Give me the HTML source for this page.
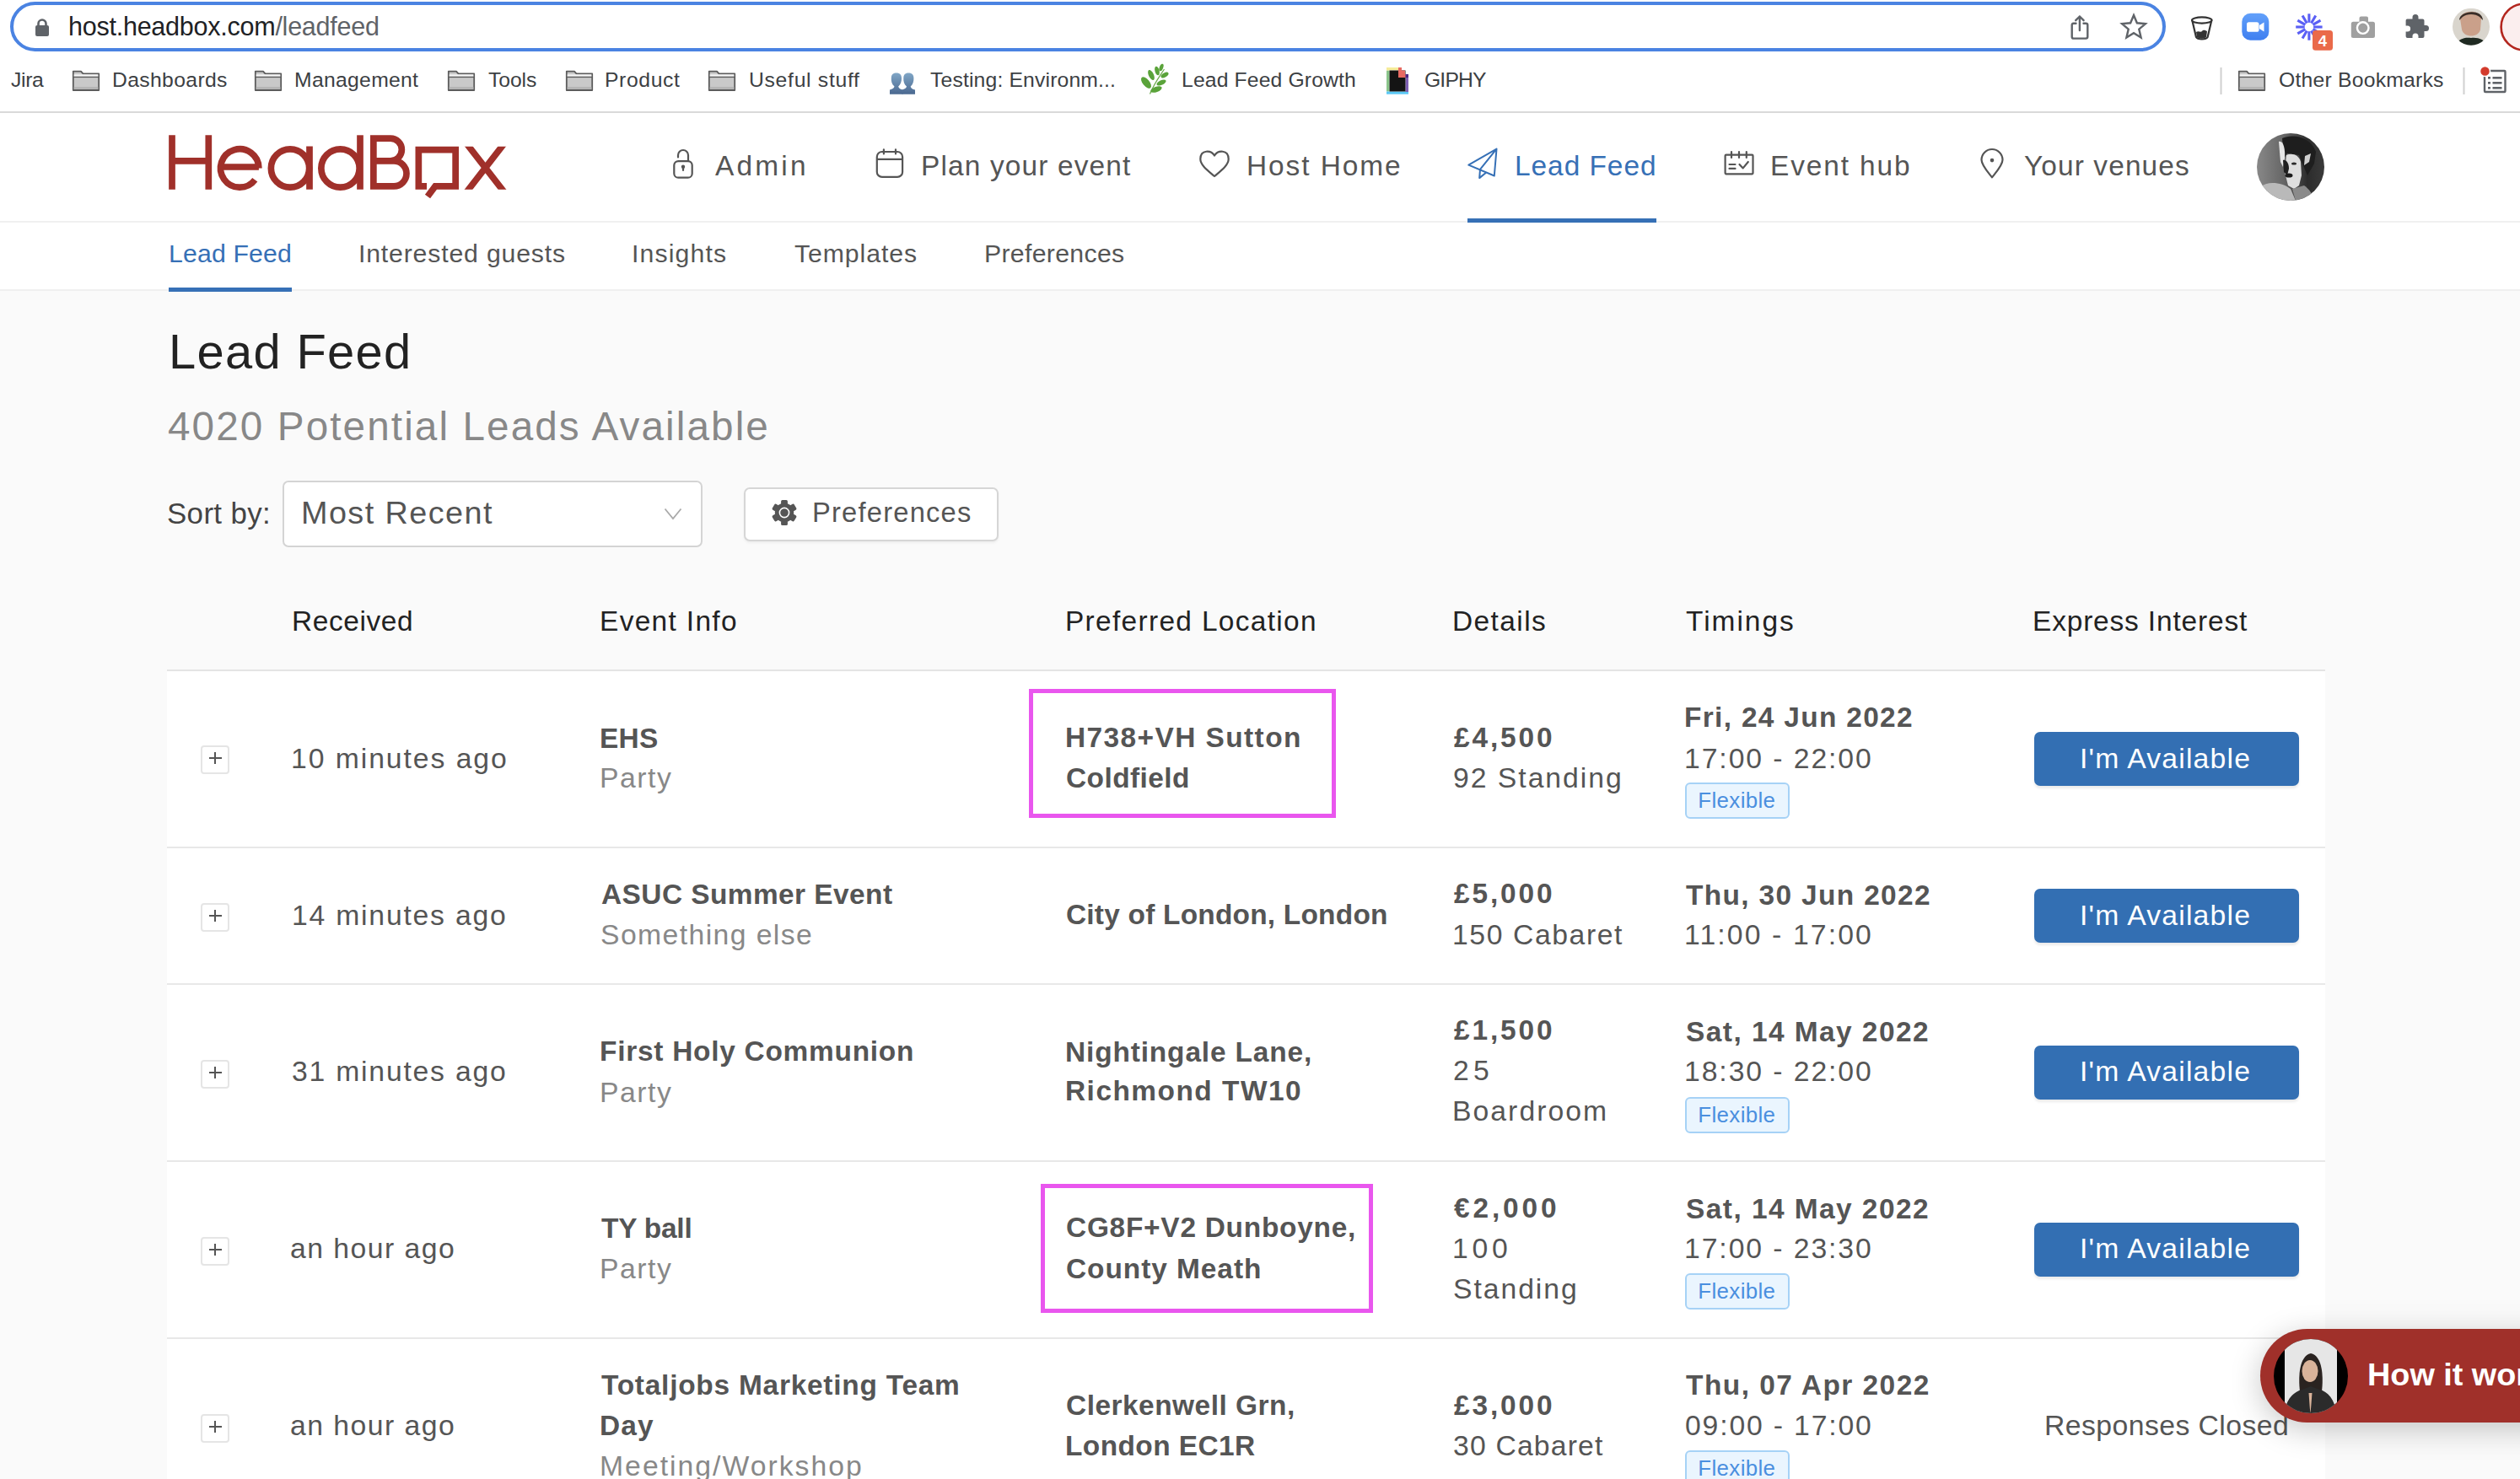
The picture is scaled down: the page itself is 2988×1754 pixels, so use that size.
<!DOCTYPE html>
<html><head><meta charset="utf-8">
<style>
html,body{margin:0;padding:0;}
body{width:2988px;height:1754px;overflow:hidden;background:#fafafa;position:relative;font-family:"Liberation Sans",sans-serif;}
.a{position:absolute;}
.t{position:absolute;white-space:pre;line-height:1;font-family:"Liberation Sans",sans-serif;}
svg{position:absolute;overflow:visible;}
</style></head><body>
<!-- browser chrome -->
<div class="a" style="left:0;top:0;width:2988px;height:132px;background:#fff"></div>
<div class="a" style="left:0;top:132px;width:2988px;height:2px;background:#d9d9d9"></div>
<div class="a" style="left:12px;top:2px;width:2548px;height:51px;border:4px solid #4a83e2;border-radius:30px;background:#fff"></div>
<!-- site header -->
<div class="a" style="left:0;top:134px;width:2988px;height:210px;background:#fff"></div>
<div class="a" style="left:0;top:262px;width:2988px;height:2px;background:#f0f0f0"></div>
<div class="a" style="left:0;top:343px;width:2988px;height:2px;background:#f0f0f0"></div>
<div class="a" style="left:1740px;top:259px;width:224px;height:5px;background:#3670b6"></div>
<div class="a" style="left:200px;top:341px;width:146px;height:5px;background:#3670b6"></div>

<!-- controls -->
<div class="a" style="left:335px;top:570px;width:494px;height:75px;border:2px solid #d4d4d4;border-radius:7px;background:#fff"></div>
<div class="a" style="left:882px;top:578px;width:298px;height:60px;border:2px solid #d6d6d6;border-radius:7px;background:#fff;box-shadow:0 2px 3px rgba(0,0,0,0.05)"></div>

<!-- table -->
<div class="a" style="left:198px;top:796px;width:2559px;height:960px;background:#fff"></div>
<div class="a" style="left:198px;top:794px;width:2559px;height:2px;background:#e4e4e4"></div>
<div class="a" style="left:198px;top:1004px;width:2559px;height:2px;background:#e8e8e8"></div>
<div class="a" style="left:198px;top:1166px;width:2559px;height:2px;background:#e8e8e8"></div>
<div class="a" style="left:198px;top:1376px;width:2559px;height:2px;background:#e8e8e8"></div>
<div class="a" style="left:198px;top:1586px;width:2559px;height:2px;background:#e8e8e8"></div>

<!-- PLUS BOXES -->
<div class="a" style="left:238px;top:884px;width:30px;height:30px;border:2px solid #e5e5e5;border-radius:4px;background:#fff"></div>
<div class="a" style="left:248px;top:897.5px;width:14.5px;height:2.4px;background:#555"></div>
<div class="a" style="left:254.1px;top:891.5px;width:2.4px;height:14px;background:#555"></div>
<div class="a" style="left:238px;top:1071px;width:30px;height:30px;border:2px solid #e5e5e5;border-radius:4px;background:#fff"></div>
<div class="a" style="left:248px;top:1084.5px;width:14.5px;height:2.4px;background:#555"></div>
<div class="a" style="left:254.1px;top:1078.5px;width:2.4px;height:14px;background:#555"></div>
<div class="a" style="left:238px;top:1257px;width:30px;height:30px;border:2px solid #e5e5e5;border-radius:4px;background:#fff"></div>
<div class="a" style="left:248px;top:1270.5px;width:14.5px;height:2.4px;background:#555"></div>
<div class="a" style="left:254.1px;top:1264.5px;width:2.4px;height:14px;background:#555"></div>
<div class="a" style="left:238px;top:1467px;width:30px;height:30px;border:2px solid #e5e5e5;border-radius:4px;background:#fff"></div>
<div class="a" style="left:248px;top:1480.5px;width:14.5px;height:2.4px;background:#555"></div>
<div class="a" style="left:254.1px;top:1474.5px;width:2.4px;height:14px;background:#555"></div>
<div class="a" style="left:238px;top:1677px;width:30px;height:30px;border:2px solid #e5e5e5;border-radius:4px;background:#fff"></div>
<div class="a" style="left:248px;top:1690.5px;width:14.5px;height:2.4px;background:#555"></div>
<div class="a" style="left:254.1px;top:1684.5px;width:2.4px;height:14px;background:#555"></div>
<div class="a" style="left:1220px;top:817px;width:354px;height:143px;border:5px solid #e956ee"></div>
<div class="a" style="left:1234px;top:1404px;width:384px;height:143px;border:5px solid #e956ee"></div>
<div class="a" style="left:2412px;top:868px;width:314px;height:64px;background:#336fb3;border-radius:7px;box-shadow:0 3px 3px rgba(0,0,0,0.08)"></div>
<div class="a" style="left:2412px;top:1054px;width:314px;height:64px;background:#336fb3;border-radius:7px;box-shadow:0 3px 3px rgba(0,0,0,0.08)"></div>
<div class="a" style="left:2412px;top:1240px;width:314px;height:64px;background:#336fb3;border-radius:7px;box-shadow:0 3px 3px rgba(0,0,0,0.08)"></div>
<div class="a" style="left:2412px;top:1450px;width:314px;height:64px;background:#336fb3;border-radius:7px;box-shadow:0 3px 3px rgba(0,0,0,0.08)"></div>
<div class="a" style="left:1998px;top:928px;width:120px;height:39px;background:#eaf5fe;border:2px solid #a6d2f6;border-radius:6px"></div>
<div class="a" style="left:1998px;top:1301px;width:120px;height:39px;background:#eaf5fe;border:2px solid #a6d2f6;border-radius:6px"></div>
<div class="a" style="left:1998px;top:1510px;width:120px;height:39px;background:#eaf5fe;border:2px solid #a6d2f6;border-radius:6px"></div>
<div class="a" style="left:1998px;top:1720px;width:120px;height:39px;background:#eaf5fe;border:2px solid #a6d2f6;border-radius:6px"></div><svg class="a" style="left:0;top:0" width="2988" height="300" viewBox="0 0 2988 300">
<defs><clipPath id="xclip"><rect x="540" y="173.8" width="70" height="50.9"/></clipPath></defs>
<g fill="none" stroke="#a0302a" stroke-width="7.7">
<path d="M204,160.3V224.7M247.3,160.3V224.7M204,190.9H247.3"/>
<path d="M261.5,198H306.9M306.9,199.5A22.7,22.7 0 1 0 302.3,213.2"/>
<circle cx="344" cy="199.5" r="22.65"/><path d="M367,173.5V224.7"/>
<circle cx="403.5" cy="199.5" r="22.65"/><path d="M427,160.3V224.7"/>
<path d="M442.85,160.3V224.7M439,164.15H463A13.35,13.35 0 0 1 463,190.85H439M439,190.85H467A15,15 0 0 1 467,220.85H439"/>
<path d="M506,220.85H496.35V177.65H540.15V220.85H516L507,233"/>
<g clip-path="url(#xclip)"><path d="M553,170L598,228M598,170L553,228"/></g>
</g></svg>
<svg class="a" style="left:0;top:0" width="2988" height="300" viewBox="0 0 2988 300">
<g fill="none" stroke="#555" stroke-width="2.2" stroke-linecap="round" stroke-linejoin="round">
<rect x="799.3" y="191.1" width="21.4" height="19.6" rx="5"/>
<path d="M804,186.4V184A6,6 0 0 1 816,184V191"/>
<path d="M810,198V202"/>
<rect x="1039.8" y="180" width="30.3" height="29.9" rx="6"/>
<path d="M1040,188.8H1070M1047.9,177.3V182.5M1062,177.3V182.5"/>
<path d="M1440,184.5C1436,178 1423.5,177 1423.3,188.5C1423.2,196 1433,203 1440,209C1447,203 1456.8,196 1456.7,188.5C1456.5,177 1444,178 1440,184.5Z"/>
<rect x="2045.6" y="183.7" width="32.9" height="22.6" rx="1"/>
<path d="M2053,180V187M2062,180V187M2070.8,180V187M2050.5,195H2057.5M2050.5,199.9H2057.5M2062.5,195L2066.7,199.4L2072.8,192"/>
<path d="M2362,210.3C2357,204 2349.5,196 2349.5,189.5A12.5,12.5 0 0 1 2374.5,189.5C2374.5,196 2367,204 2362,210.3Z"/>
</g>
<circle cx="810" cy="197.8" r="2.2" fill="#555"/>
<circle cx="2362" cy="190.1" r="2.3" fill="#555"/>
<g fill="none" stroke="#3670b6" stroke-width="2" stroke-linejoin="round">
<path d="M1774.5,176.6L1741.3,195.7L1771.8,208.5Z M1774.5,176.6L1755,200.8L1754.2,211.1L1762.3,204.5"/>
</g>
</svg>
<svg class="a" style="left:2676px;top:158px" width="80" height="80" viewBox="0 0 80 80">
<defs><clipPath id="avc"><circle cx="40" cy="40" r="40"/></clipPath>
<linearGradient id="avbg" x1="0" y1="0" x2="1" y2="0"><stop offset="0" stop-color="#888"/><stop offset="0.4" stop-color="#666"/><stop offset="0.75" stop-color="#2c2c2c"/><stop offset="1" stop-color="#3a3a3a"/></linearGradient></defs>
<g clip-path="url(#avc)">
<rect width="80" height="80" fill="url(#avbg)"/>
<path d="M30,6C42,0 64,4 70,22L68,36L60,50L54,36L50,26L36,24L32,30Z" fill="#1e1e1e"/>
<path d="M26,10C31,8 34,18 33,30L31,40L28,34Z" fill="#e6e6e6"/>
<path d="M57,27L64,24L62,34L56,38Z" fill="#cfcfcf"/>
<path d="M35,26C42,23 50,26 52,34L53,50L50,62L44,66L37,62L33,46Z" fill="#dedede"/>
<path d="M31,32C35,31 38,36 38,42L36,50L32,46Z" fill="#202020"/>
<ellipse cx="38" cy="50" rx="4.5" ry="2.6" fill="#1c1c1c"/>
<ellipse cx="44" cy="36" rx="3" ry="1.6" fill="#2a2a2a"/>
<path d="M4,64C12,56 30,58 40,66L46,80L0,80Z" fill="#b9b9b9"/>
<path d="M42,66L56,62C62,66 66,72 68,80L46,80Z" fill="#8a8a8a"/>
</g></svg>
<svg class="a" style="left:914.9px;top:592.6px" width="30" height="30" viewBox="-15 -15 30 30">
<g fill="#555">
<circle r="11.2"/>
<rect x="-3.9" y="-15" width="7.8" height="6" rx="1.5" transform="rotate(0)"/><rect x="-3.9" y="-15" width="7.8" height="6" rx="1.5" transform="rotate(60)"/><rect x="-3.9" y="-15" width="7.8" height="6" rx="1.5" transform="rotate(120)"/><rect x="-3.9" y="-15" width="7.8" height="6" rx="1.5" transform="rotate(180)"/><rect x="-3.9" y="-15" width="7.8" height="6" rx="1.5" transform="rotate(240)"/><rect x="-3.9" y="-15" width="7.8" height="6" rx="1.5" transform="rotate(300)"/>
</g>
<circle r="5.6" fill="none" stroke="#fff" stroke-width="1.6"/>
</svg>
<svg class="a" style="left:0;top:0" width="1000" height="700"><path d="M788.5,603.5L798,615L807.5,603.5" fill="none" stroke="#aaa" stroke-width="1.8"/></svg><svg class="a" style="left:0;top:0" width="2988" height="134" viewBox="0 0 2988 134"><path d="M45.5,31V28A4.5,4.5 0 0 1 54.5,28V31" fill="none" stroke="#5f6368" stroke-width="2.6"/><rect x="42" y="30" width="16" height="13" rx="2" fill="#5f6368"/><g fill="none" stroke="#5f6368" stroke-width="2.4" stroke-linecap="round" stroke-linejoin="round"><path d="M2461.5,27.8H2458.5A2,2 0 0 0 2456.7,29.8V43.8A2,2 0 0 0 2458.7,45.6H2473.3A2,2 0 0 0 2475.3,43.6V29.8A2,2 0 0 0 2473.3,27.8H2470.5"/><path d="M2465.9,36V19.5M2461.2,24.2L2465.9,19.5L2470.6,24.2"/></g><polygon points="2530.00,18.00 2533.88,27.26 2543.89,28.09 2536.28,34.64 2538.58,44.41 2530.00,39.20 2521.42,44.41 2523.72,34.64 2516.11,28.09 2526.12,27.26" fill="none" stroke="#5f6368" stroke-width="2.4" stroke-linejoin="miter"/><g fill="none" stroke="#333" stroke-width="2.2"><ellipse cx="2610.8" cy="24" rx="11.8" ry="3.6"/><path d="M2599.5,25L2604,44A7,3 0 0 0 2617.6,44L2622.1,25"/></g><path d="M2604,38C2607,36 2609,39 2611,37C2613,35 2614,36 2617,37L2616,44A6,2.5 0 0 1 2605,44Z" fill="#333"/><defs><linearGradient id="zg" x1="0" y1="0" x2="0" y2="1"><stop offset="0" stop-color="#62a0fa"/><stop offset="1" stop-color="#3f7ff0"/></linearGradient></defs><rect x="2658.3" y="15.8" width="32" height="32" rx="10" fill="url(#zg)"/><rect x="2664" y="26.2" width="14.5" height="11.6" rx="2.6" fill="#fff"/><path d="M2679,30L2684.5,26.5V37.5L2679,34Z" fill="#fff"/><g transform="translate(2737.9,32)" fill="#5a5ff5"><rect x="-1.55" y="-15.7" width="3.1" height="10.5" transform="rotate(0)"/><rect x="-1.55" y="-15.7" width="3.1" height="10.5" transform="rotate(30)"/><rect x="-1.55" y="-15.7" width="3.1" height="10.5" transform="rotate(60)"/><rect x="-1.55" y="-15.7" width="3.1" height="10.5" transform="rotate(90)"/><rect x="-1.55" y="-15.7" width="3.1" height="10.5" transform="rotate(120)"/><rect x="-1.55" y="-15.7" width="3.1" height="10.5" transform="rotate(150)"/><rect x="-1.55" y="-15.7" width="3.1" height="10.5" transform="rotate(180)"/><rect x="-1.55" y="-15.7" width="3.1" height="10.5" transform="rotate(210)"/><rect x="-1.55" y="-15.7" width="3.1" height="10.5" transform="rotate(240)"/><rect x="-1.55" y="-15.7" width="3.1" height="10.5" transform="rotate(270)"/><rect x="-1.55" y="-15.7" width="3.1" height="10.5" transform="rotate(300)"/><rect x="-1.55" y="-15.7" width="3.1" height="10.5" transform="rotate(330)"/></g><rect x="2742" y="36" width="24" height="23.7" rx="3.5" fill="#ea6a4a"/><text x="2754" y="55" font-family="Liberation Sans" font-weight="bold" font-size="18.5" fill="#fff" text-anchor="middle">4</text><path d="M2797.5,25.7V21.5A2,2 0 0 1 2799.5,19.5H2806A2,2 0 0 1 2808,21.5V25.7H2813.5A2.5,2.5 0 0 1 2816,28.2V42.5A2.5,2.5 0 0 1 2813.5,45H2790.3A2.5,2.5 0 0 1 2787.8,42.5V28.2A2.5,2.5 0 0 1 2790.3,25.7Z" fill="#a0a0a0"/><circle cx="2801.7" cy="33.1" r="6.8" fill="none" stroke="#fff" stroke-width="2.4"/><circle cx="2801.7" cy="33.1" r="3.4" fill="#a0a0a0"/><path d="M2855,22.5H2860.5V20.5A3.5,3.5 0 0 1 2867.5,20.5V22.5H2872.5A2,2 0 0 1 2874.5,24.5V30H2876.5A3.5,3.5 0 0 1 2876.5,37H2874.5V43A2,2 0 0 1 2872.5,45H2867.5V43A3.5,3.5 0 0 0 2860.5,43V45H2854.6A2,2 0 0 1 2852.6,43V37.5H2854.6A3.5,3.5 0 0 0 2854.6,30.5H2852.6V24.5A2,2 0 0 1 2855,22.5Z" fill="#5f6368"/><defs><clipPath id="pav"><circle cx="2930" cy="31.7" r="22"/></clipPath></defs><g clip-path="url(#pav)"><rect x="2908" y="9.7" width="44" height="44" fill="#d9d5cd"/><path d="M2917,22C2918,12 2940,10 2942,22L2941,35C2939,45 2921,45 2919,35Z" fill="#caa08a"/><path d="M2916,24C2916,12 2944,10 2944,24L2940,20C2935,16 2925,16 2920,20Z" fill="#3a2e28"/><path d="M2912,54C2915,46 2922,44 2930,45C2938,44 2946,47 2950,54Z" fill="#1f2a22"/></g><circle cx="2993" cy="32" r="27.4" fill="#fbeeee" stroke="#b3261e" stroke-width="2.6"/><rect x="2632.5" y="80" width="2" height="32" fill="#d0d0d0"/><rect x="2920.5" y="80" width="2" height="32" fill="#d0d0d0"/><g fill="none" stroke="#5f6368" stroke-width="2.4"><rect x="2946" y="84" width="24.5" height="25" rx="1"/></g><g fill="#5f6368"><rect x="2950" y="91" width="3" height="2.6"/><rect x="2955.5" y="91" width="11" height="2.6"/><rect x="2950" y="97" width="3" height="2.6"/><rect x="2955.5" y="97" width="11" height="2.6"/><rect x="2950" y="103" width="3" height="2.6"/><rect x="2955.5" y="103" width="11" height="2.6"/></g><circle cx="2946.5" cy="84.5" r="6" fill="#d33b2c" stroke="#fff" stroke-width="1.5"/><path d="M86.8,84.6H96L98.5,87.4H117.2V107H86.8Z" fill="#c9c9c9" stroke="#5c5c5c" stroke-width="1.8" stroke-linejoin="round"/><rect x="87.7" y="88.3" width="28.6" height="3" fill="#f4f4f4"/><path d="M86.8,91.4H117.2" stroke="#5c5c5c" stroke-width="1.4"/><rect x="87.7" y="103" width="28.6" height="3" fill="#b5b5b5"/><path d="M302.8,84.6H312L314.5,87.4H333.2V107H302.8Z" fill="#c9c9c9" stroke="#5c5c5c" stroke-width="1.8" stroke-linejoin="round"/><rect x="303.7" y="88.3" width="28.6" height="3" fill="#f4f4f4"/><path d="M302.8,91.4H333.2" stroke="#5c5c5c" stroke-width="1.4"/><rect x="303.7" y="103" width="28.6" height="3" fill="#b5b5b5"/><path d="M531.8,84.6H541L543.5,87.4H562.2V107H531.8Z" fill="#c9c9c9" stroke="#5c5c5c" stroke-width="1.8" stroke-linejoin="round"/><rect x="532.7" y="88.3" width="28.6" height="3" fill="#f4f4f4"/><path d="M531.8,91.4H562.2" stroke="#5c5c5c" stroke-width="1.4"/><rect x="532.7" y="103" width="28.6" height="3" fill="#b5b5b5"/><path d="M671.8,84.6H681L683.5,87.4H702.2V107H671.8Z" fill="#c9c9c9" stroke="#5c5c5c" stroke-width="1.8" stroke-linejoin="round"/><rect x="672.7" y="88.3" width="28.6" height="3" fill="#f4f4f4"/><path d="M671.8,91.4H702.2" stroke="#5c5c5c" stroke-width="1.4"/><rect x="672.7" y="103" width="28.6" height="3" fill="#b5b5b5"/><path d="M840.8,84.6H850L852.5,87.4H871.2V107H840.8Z" fill="#c9c9c9" stroke="#5c5c5c" stroke-width="1.8" stroke-linejoin="round"/><rect x="841.7" y="88.3" width="28.6" height="3" fill="#f4f4f4"/><path d="M840.8,91.4H871.2" stroke="#5c5c5c" stroke-width="1.4"/><rect x="841.7" y="103" width="28.6" height="3" fill="#b5b5b5"/><path d="M2654.8,84.6H2664L2666.5,87.4H2685.2V107H2654.8Z" fill="#c9c9c9" stroke="#5c5c5c" stroke-width="1.8" stroke-linejoin="round"/><rect x="2655.7" y="88.3" width="28.6" height="3" fill="#f4f4f4"/><path d="M2654.8,91.4H2685.2" stroke="#5c5c5c" stroke-width="1.4"/><rect x="2655.7" y="103" width="28.6" height="3" fill="#b5b5b5"/><defs><linearGradient id="pg" x1="0" y1="0" x2="0" y2="1"><stop offset="0" stop-color="#80a6c6"/><stop offset="1" stop-color="#4a6890"/></linearGradient></defs><g fill="url(#pg)"><path d="M1055,111.7V106.4C1058,105.5 1060,105 1060.5,102.5C1057.5,100 1056.5,96 1056.8,92.5C1057,88 1059.5,86.6 1062.8,86.6C1066.2,86.6 1068.8,88 1069,92.5C1069.2,96 1068,100 1065.2,102.5C1065.5,105 1068.5,106 1070.5,106.4V111.7Z"/><path d="M1069.5,111.7V106.4C1072.5,105.5 1074.5,105 1075,102.5C1072,100 1071,96 1071.3,92.5C1071.5,88 1074,86.6 1077.3,86.6C1080.6,86.6 1083.2,88 1083.4,92.5C1083.6,96 1082.5,100 1079.7,102.5C1080,105 1083,106 1085,106.4V111.7Z"/></g><g><path d="M1363.5,111.5C1368,100 1374,92 1380.5,82" stroke="#6aa84a" stroke-width="1.2" fill="none"/><g fill="#5aa33a"><ellipse cx="1359" cy="98" rx="4" ry="8" transform="rotate(-40 1359 98)"/><ellipse cx="1371" cy="106" rx="3.2" ry="7" transform="rotate(70 1371 106)"/><ellipse cx="1365" cy="89" rx="3" ry="6.5" transform="rotate(-25 1365 89)"/><ellipse cx="1377" cy="98" rx="2.8" ry="6" transform="rotate(65 1377 98)"/><ellipse cx="1372" cy="84" rx="2.6" ry="5.5" transform="rotate(-15 1372 84)"/><ellipse cx="1381" cy="89" rx="2.5" ry="5" transform="rotate(60 1381 89)"/><ellipse cx="1377" cy="80" rx="2.2" ry="4.5" transform="rotate(20 1377 80)"/></g></g><rect x="1644" y="80" width="26" height="31.7" fill="#fff"/><rect x="1644" y="83.5" width="3.5" height="25" fill="#8ac48a"/><rect x="1644" y="108.5" width="26" height="3.2" fill="#5bc8f5"/><rect x="1666.5" y="92" width="3.5" height="17" fill="#7d5fb3"/><rect x="1644" y="80" width="14" height="3.5" fill="#f5ec9a"/><rect x="1647.5" y="83.5" width="19" height="25" fill="#141414"/><path d="M1658,80H1662V83.5H1666V88H1670V92H1658Z" fill="#e76a62"/><rect x="1666.5" y="88" width="3.5" height="4" fill="#4a2a85"/></svg>

<div class="t" style="left:81.0px;top:16.2px;font-size:30.52px;letter-spacing:-0.25px;color:#202124;">host.headbox.com<span style="color:#5f6368">/leadfeed</span></div>
<div class="t" style="left:13.0px;top:83.1px;font-size:24.71px;letter-spacing:-0.35px;color:#3c4043;">Jira</div>
<div class="t" style="left:133.0px;top:83.1px;font-size:24.71px;letter-spacing:0.36px;color:#3c4043;">Dashboards</div>
<div class="t" style="left:349.0px;top:83.1px;font-size:24.71px;letter-spacing:0.31px;color:#3c4043;">Management</div>
<div class="t" style="left:579.0px;top:83.1px;font-size:24.71px;letter-spacing:-0.07px;color:#3c4043;">Tools</div>
<div class="t" style="left:717.0px;top:83.1px;font-size:24.71px;letter-spacing:0.63px;color:#3c4043;">Product</div>
<div class="t" style="left:888.0px;top:83.1px;font-size:24.71px;letter-spacing:0.71px;color:#3c4043;">Useful stuff</div>
<div class="t" style="left:1103.0px;top:83.1px;font-size:24.71px;letter-spacing:0.16px;color:#3c4043;">Testing: Environm...</div>
<div class="t" style="left:1401.0px;top:83.1px;font-size:24.71px;letter-spacing:0.15px;color:#3c4043;">Lead Feed Growth</div>
<div class="t" style="left:1689.0px;top:83.1px;font-size:24.71px;letter-spacing:-0.84px;color:#3c4043;">GIPHY</div>
<div class="t" style="left:2702.0px;top:83.1px;font-size:24.71px;letter-spacing:0.23px;color:#3c4043;">Other Bookmarks</div>
<div class="t" style="left:848.0px;top:179.7px;font-size:33.43px;letter-spacing:3.21px;color:#555;">Admin</div>
<div class="t" style="left:1092.0px;top:179.7px;font-size:33.43px;letter-spacing:1.15px;color:#555;">Plan your event</div>
<div class="t" style="left:1478.0px;top:179.7px;font-size:33.43px;letter-spacing:1.93px;color:#555;">Host Home</div>
<div class="t" style="left:1796.0px;top:179.7px;font-size:33.43px;letter-spacing:0.97px;color:#3670b6;">Lead Feed</div>
<div class="t" style="left:2099.0px;top:179.7px;font-size:33.43px;letter-spacing:1.88px;color:#555;">Event hub</div>
<div class="t" style="left:2400.0px;top:179.7px;font-size:33.43px;letter-spacing:1.11px;color:#555;">Your venues</div>
<div class="t" style="left:200.0px;top:286.4px;font-size:30.23px;letter-spacing:0.16px;color:#3670b6;">Lead Feed</div>
<div class="t" style="left:425.0px;top:286.4px;font-size:30.23px;letter-spacing:0.83px;color:#555;">Interested guests</div>
<div class="t" style="left:749.0px;top:286.4px;font-size:30.23px;letter-spacing:1.14px;color:#555;">Insights</div>
<div class="t" style="left:942.0px;top:286.4px;font-size:30.23px;letter-spacing:0.92px;color:#555;">Templates</div>
<div class="t" style="left:1167.0px;top:286.4px;font-size:30.23px;letter-spacing:0.32px;color:#555;">Preferences</div>
<div class="t" style="left:200.0px;top:389.0px;font-size:57.85px;letter-spacing:1.33px;color:#222;">Lead Feed</div>
<div class="t" style="left:199.0px;top:481.6px;font-size:47.67px;letter-spacing:2.10px;color:#888;">4020 Potential Leads Available</div>
<div class="t" style="left:198.0px;top:591.5px;font-size:34.88px;letter-spacing:0.36px;color:#444;">Sort by:</div>
<div class="t" style="left:357.0px;top:590.0px;font-size:37.79px;letter-spacing:1.44px;color:#555;">Most Recent</div>
<div class="t" style="left:963.0px;top:592.3px;font-size:32.70px;letter-spacing:1.21px;color:#555;">Preferences</div>
<div class="t" style="left:346.0px;top:719.7px;font-size:33.43px;letter-spacing:0.61px;color:#222;">Received</div>
<div class="t" style="left:711.0px;top:719.7px;font-size:33.43px;letter-spacing:1.34px;color:#222;">Event Info</div>
<div class="t" style="left:1263.0px;top:719.7px;font-size:33.43px;letter-spacing:1.33px;color:#222;">Preferred Location</div>
<div class="t" style="left:1722.0px;top:719.7px;font-size:33.43px;letter-spacing:1.43px;color:#222;">Details</div>
<div class="t" style="left:1999.0px;top:719.7px;font-size:33.43px;letter-spacing:1.99px;color:#222;">Timings</div>
<div class="t" style="left:2410.0px;top:719.7px;font-size:33.43px;letter-spacing:0.85px;color:#222;">Express Interest</div>
<div class="t" style="left:345.0px;top:882.5px;font-size:33.72px;letter-spacing:1.94px;color:#555;">10 minutes ago</div>
<div class="t" style="left:711.0px;top:858.7px;font-size:33.43px;letter-spacing:0.29px;color:#555;font-weight:bold;">EHS</div>
<div class="t" style="left:711.0px;top:905.5px;font-size:33.72px;letter-spacing:1.54px;color:#888;">Party</div>
<div class="t" style="left:1263.0px;top:857.7px;font-size:33.43px;letter-spacing:1.42px;color:#555;font-weight:bold;">H738+VH Sutton</div>
<div class="t" style="left:1264.0px;top:905.7px;font-size:33.43px;letter-spacing:0.43px;color:#555;font-weight:bold;">Coldfield</div>
<div class="t" style="left:1724.0px;top:857.7px;font-size:33.43px;letter-spacing:2.87px;color:#555;font-weight:bold;">£4,500</div>
<div class="t" style="left:1723.0px;top:905.5px;font-size:33.72px;letter-spacing:1.98px;color:#555;">92 Standing</div>
<div class="t" style="left:1997.0px;top:833.7px;font-size:33.43px;letter-spacing:1.32px;color:#555;font-weight:bold;">Fri, 24 Jun 2022</div>
<div class="t" style="left:1997.0px;top:882.5px;font-size:33.72px;letter-spacing:1.92px;color:#555;">17:00 - 22:00</div>
<div class="t" style="left:346.0px;top:1068.5px;font-size:33.72px;letter-spacing:1.78px;color:#555;">14 minutes ago</div>
<div class="t" style="left:713.0px;top:1043.7px;font-size:33.43px;letter-spacing:0.44px;color:#555;font-weight:bold;">ASUC Summer Event</div>
<div class="t" style="left:712.0px;top:1091.5px;font-size:33.72px;letter-spacing:1.41px;color:#888;">Something else</div>
<div class="t" style="left:1264.0px;top:1067.7px;font-size:33.43px;letter-spacing:0.22px;color:#555;font-weight:bold;">City of London, London</div>
<div class="t" style="left:1724.0px;top:1042.7px;font-size:33.43px;letter-spacing:2.87px;color:#555;font-weight:bold;">£5,000</div>
<div class="t" style="left:1722.0px;top:1091.5px;font-size:33.72px;letter-spacing:1.58px;color:#555;">150 Cabaret</div>
<div class="t" style="left:1999.0px;top:1044.7px;font-size:33.43px;letter-spacing:1.35px;color:#555;font-weight:bold;">Thu, 30 Jun 2022</div>
<div class="t" style="left:1997.0px;top:1091.5px;font-size:33.72px;letter-spacing:2.13px;color:#555;">11:00 - 17:00</div>
<div class="t" style="left:346.0px;top:1253.5px;font-size:33.72px;letter-spacing:1.78px;color:#555;">31 minutes ago</div>
<div class="t" style="left:711.0px;top:1229.7px;font-size:33.43px;letter-spacing:0.74px;color:#555;font-weight:bold;">First Holy Communion</div>
<div class="t" style="left:711.0px;top:1278.5px;font-size:33.72px;letter-spacing:1.54px;color:#888;">Party</div>
<div class="t" style="left:1263.0px;top:1230.7px;font-size:33.43px;letter-spacing:0.86px;color:#555;font-weight:bold;">Nightingale Lane,</div>
<div class="t" style="left:1263.0px;top:1276.7px;font-size:33.43px;letter-spacing:1.48px;color:#555;font-weight:bold;">Richmond TW10</div>
<div class="t" style="left:1724.0px;top:1204.7px;font-size:33.43px;letter-spacing:2.87px;color:#555;font-weight:bold;">£1,500</div>
<div class="t" style="left:1723.0px;top:1252.5px;font-size:33.72px;letter-spacing:5.25px;color:#555;">25</div>
<div class="t" style="left:1722.0px;top:1300.5px;font-size:33.72px;letter-spacing:2.04px;color:#555;">Boardroom</div>
<div class="t" style="left:1999.0px;top:1206.7px;font-size:33.43px;letter-spacing:1.46px;color:#555;font-weight:bold;">Sat, 14 May 2022</div>
<div class="t" style="left:1997.0px;top:1253.5px;font-size:33.72px;letter-spacing:1.92px;color:#555;">18:30 - 22:00</div>
<div class="t" style="left:344.0px;top:1463.5px;font-size:33.72px;letter-spacing:1.48px;color:#555;">an hour ago</div>
<div class="t" style="left:713.0px;top:1439.7px;font-size:33.43px;letter-spacing:-0.21px;color:#555;font-weight:bold;">TY ball</div>
<div class="t" style="left:711.0px;top:1487.5px;font-size:33.72px;letter-spacing:1.54px;color:#888;">Party</div>
<div class="t" style="left:1264.0px;top:1438.7px;font-size:33.43px;letter-spacing:0.74px;color:#555;font-weight:bold;">CG8F+V2 Dunboyne,</div>
<div class="t" style="left:1264.0px;top:1487.7px;font-size:33.43px;letter-spacing:0.95px;color:#555;font-weight:bold;">County Meath</div>
<div class="t" style="left:1724.0px;top:1415.7px;font-size:33.43px;letter-spacing:3.87px;color:#555;font-weight:bold;">€2,000</div>
<div class="t" style="left:1722.0px;top:1463.5px;font-size:33.72px;letter-spacing:4.75px;color:#555;">100</div>
<div class="t" style="left:1723.0px;top:1511.5px;font-size:33.72px;letter-spacing:1.95px;color:#555;">Standing</div>
<div class="t" style="left:1999.0px;top:1416.7px;font-size:33.43px;letter-spacing:1.46px;color:#555;font-weight:bold;">Sat, 14 May 2022</div>
<div class="t" style="left:1997.0px;top:1463.5px;font-size:33.72px;letter-spacing:1.92px;color:#555;">17:00 - 23:30</div>
<div class="t" style="left:344.0px;top:1673.5px;font-size:33.72px;letter-spacing:1.48px;color:#555;">an hour ago</div>
<div class="t" style="left:713.0px;top:1625.7px;font-size:33.43px;letter-spacing:0.76px;color:#555;font-weight:bold;">Totaljobs Marketing Team</div>
<div class="t" style="left:711.0px;top:1673.7px;font-size:33.43px;letter-spacing:1.14px;color:#555;font-weight:bold;">Day</div>
<div class="t" style="left:711.0px;top:1721.5px;font-size:33.72px;letter-spacing:2.02px;color:#888;">Meeting/Workshop</div>
<div class="t" style="left:1264.0px;top:1649.7px;font-size:33.43px;letter-spacing:0.50px;color:#555;font-weight:bold;">Clerkenwell Grn,</div>
<div class="t" style="left:1263.0px;top:1697.7px;font-size:33.43px;letter-spacing:0.42px;color:#555;font-weight:bold;">London EC1R</div>
<div class="t" style="left:1724.0px;top:1649.7px;font-size:33.43px;letter-spacing:2.87px;color:#555;font-weight:bold;">£3,000</div>
<div class="t" style="left:1723.0px;top:1697.5px;font-size:33.72px;letter-spacing:1.17px;color:#555;">30 Cabaret</div>
<div class="t" style="left:1999.0px;top:1625.7px;font-size:33.43px;letter-spacing:1.47px;color:#555;font-weight:bold;">Thu, 07 Apr 2022</div>
<div class="t" style="left:1998.0px;top:1673.5px;font-size:33.72px;letter-spacing:1.84px;color:#555;">09:00 - 17:00</div>
<div class="t" style="left:2424.0px;top:1673.5px;font-size:33.72px;letter-spacing:0.45px;color:#555;">Responses Closed</div>
<div class="t" style="left:2466.0px;top:882.5px;font-size:33.72px;letter-spacing:1.19px;color:#fff;">I'm Available</div>
<div class="t" style="left:2466.0px;top:1068.5px;font-size:33.72px;letter-spacing:1.19px;color:#fff;">I'm Available</div>
<div class="t" style="left:2466.0px;top:1253.5px;font-size:33.72px;letter-spacing:1.19px;color:#fff;">I'm Available</div>
<div class="t" style="left:2466.0px;top:1463.5px;font-size:33.72px;letter-spacing:1.19px;color:#fff;">I'm Available</div>
<div class="t" style="left:2013.3px;top:936.6px;font-size:25.87px;letter-spacing:0.37px;color:#4a8fdf;">Flexible</div>
<div class="t" style="left:2013.3px;top:1309.6px;font-size:25.87px;letter-spacing:0.37px;color:#4a8fdf;">Flexible</div>
<div class="t" style="left:2013.3px;top:1518.6px;font-size:25.87px;letter-spacing:0.37px;color:#4a8fdf;">Flexible</div>
<div class="t" style="left:2013.3px;top:1728.6px;font-size:25.87px;letter-spacing:0.37px;color:#4a8fdf;">Flexible</div>
<div class="a" style="left:2680px;top:1576px;width:400px;height:111px;border-radius:56px;background:#a0302a;box-shadow:0 8px 36px rgba(0,0,0,0.22)"></div>
<svg class="a" style="left:2696px;top:1588px" width="88" height="88" viewBox="0 0 88 88">
<defs><clipPath id="vc"><circle cx="44" cy="44" r="44"/></clipPath></defs>
<g clip-path="url(#vc)"><rect width="88" height="88" fill="#000"/><rect x="13" y="0" width="62" height="88" fill="#e6e6e6"/>
<path d="M31,62C29,45 30,20 44,17C58,20 59,45 57,62Z" fill="#2a2320"/>
<ellipse cx="43" cy="38" rx="9.5" ry="13" fill="#d9b39a"/>
<path d="M13,88C14,72 24,62 34,60L44,56L54,60C64,62 73,72 74,88Z" fill="#2b2b2b"/>
<path d="M41.5,64C42,70 42.5,80 43.5,88C44.5,80 45,70 45.5,64Z" fill="#d9b39a"/>
</g></svg>
<div class="t" style="left:2807px;top:1612px;font-size:37.8px;font-weight:bold;color:#fff">How it works</div>
</body></html>
